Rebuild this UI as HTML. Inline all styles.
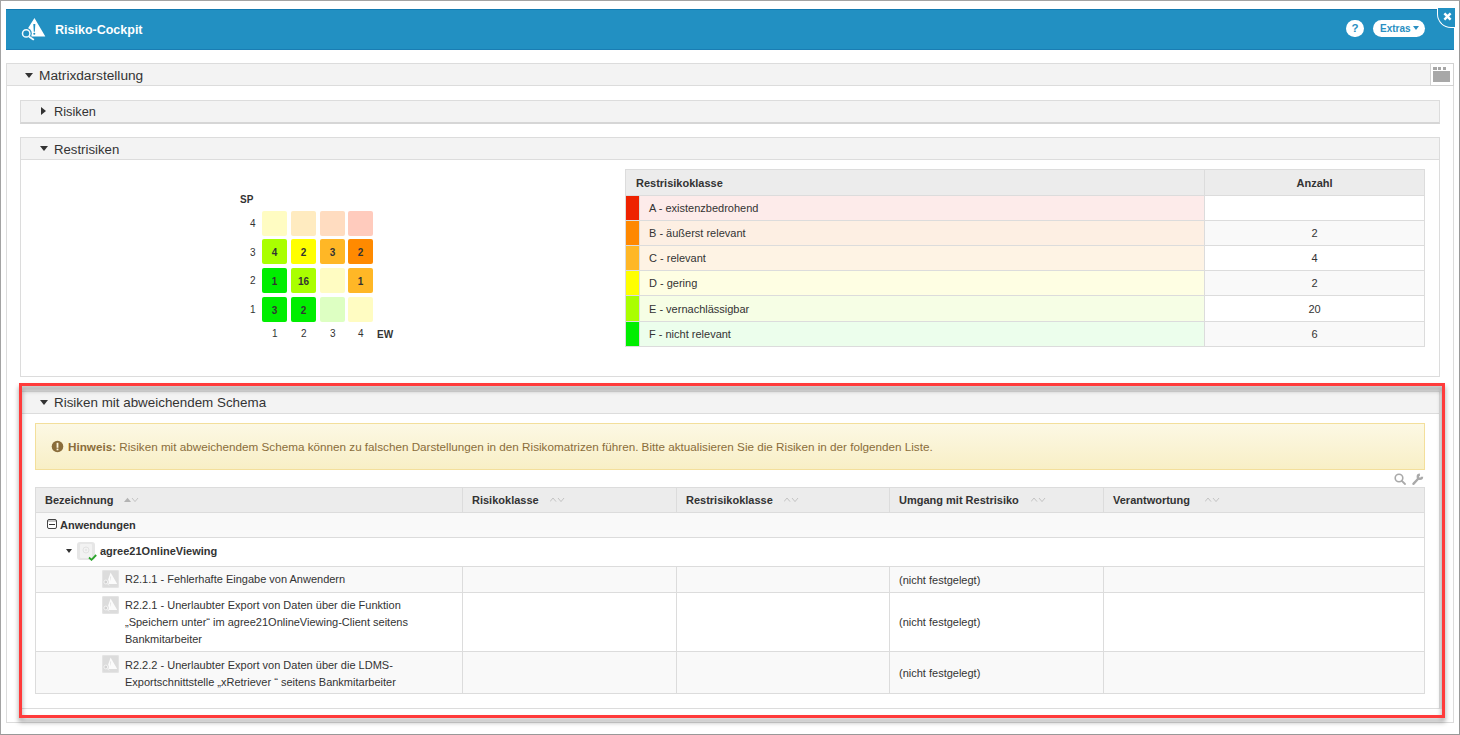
<!DOCTYPE html>
<html><head><meta charset="utf-8">
<style>
*{box-sizing:border-box;margin:0;padding:0}
html,body{width:1460px;height:735px;overflow:hidden;background:#fff}
body{font-family:"Liberation Sans",sans-serif;color:#333;position:relative}
.abs{position:absolute}
.outer{left:0;top:0;width:1460px;height:735px;border:1px solid #a3a3a3;border-right-color:#999;border-bottom-color:#999}
.hdr{left:6px;top:9px;width:1448px;height:41px;background:#2290c2;border-top:1px solid #137ab0;border-bottom:1px solid #1a7db3}
.title{left:55px;top:21px;font-size:12.5px;font-weight:bold;color:#fff;line-height:18px;white-space:nowrap}
.qbtn{left:1346px;top:20px;width:18px;height:17px;border-radius:9px;background:#fff;color:#2a8fc2;font-weight:bold;font-size:11.5px;line-height:16px;text-align:center}
.xbtn{left:1373px;top:20px;width:52px;height:17px;border-radius:9px;background:#fff;color:#2a8fc2;font-weight:bold;font-size:10px;line-height:17px;padding-left:7px;white-space:nowrap}
.close{left:1437px;top:8px;width:18px;height:20px;background:#2290c2;border-bottom-left-radius:14px;border-left:1px solid #fff;border-bottom:1px solid #fff}
.panel{border:1px solid #dcdcdc;background:#fff}
.ph{background:#f3f3f3;border-bottom:1px solid #dcdcdc}
.ptxt{font-size:13.2px;line-height:16px;color:#333;white-space:nowrap}
.caretd{width:0;height:0;border-left:4.5px solid transparent;border-right:4.5px solid transparent;border-top:5px solid #333}
.caretr{width:0;height:0;border-top:4px solid transparent;border-bottom:4px solid transparent;border-left:5px solid #333}
.cell{width:25px;height:25px;border-radius:2px;font-size:10px;font-weight:bold;text-align:center;line-height:27px;color:#333}
.lbl{font-size:10px;color:#333;line-height:12px}
table{border-collapse:collapse}
.leg{left:625px;top:169px;width:800px;font-size:11px}
.leg td,.leg th{border:1px solid #dcdcdc;height:25px;padding:0}
.leg th{background:#ececec;font-weight:bold;height:26px}
.grid{left:35px;top:487px;width:1390px;font-size:11px}
.grid td,.grid th{border:1px solid #dcdcdc;padding:0 9px;vertical-align:middle}
.grid th{background:#ececec;text-align:left;height:25px;white-space:nowrap}
.rc{padding:0 !important;position:relative;vertical-align:top !important}
.ri{position:absolute;left:66px;top:3px;width:17px;height:18px;border-radius:2px;background:#dcdcdc;box-shadow:inset 0 0 0 1px #e4e4e4}
.ri svg{position:absolute;left:0;top:0}
.rt{padding-left:89px;line-height:17px;white-space:nowrap;padding-top:3px}
.sort{display:inline-block;vertical-align:middle;margin-left:11px;width:15px;height:6px;position:relative;top:-5px}
</style></head><body>
<div class="abs outer"></div>

<!-- header -->
<div class="abs hdr"></div>
<svg class="abs" style="left:20px;top:16px" width="28" height="27" viewBox="0 0 28 27">
  <path d="M14.3 2.2 Q14.4 1.9 14.6 2.2 L25.2 20.2 Q25.3 20.6 24.9 20.6 L11.5 20.6 L10 18 L8 12.3 Z" fill="#fff"/>
  <path d="M13.3 8 L15.3 8 L14.8 15.8 L13.8 15.8 Z" fill="#2290c2"/>
  <circle cx="14.3" cy="17.7" r="1.05" fill="#2290c2"/>
  <circle cx="6.2" cy="17.4" r="5.6" fill="#2290c2"/>
  <circle cx="6.2" cy="17.4" r="3.7" fill="none" stroke="#f4fafd" stroke-width="1.5"/>
  <line x1="9.6" y1="20.9" x2="13.3" y2="23.4" stroke="#f4fafd" stroke-width="1.8" stroke-linecap="round"/>
</svg>
<div class="abs title">Risiko-Cockpit</div>
<div class="abs qbtn">?</div>
<div class="abs xbtn">Extras<span style="display:inline-block;width:0;height:0;border-left:3px solid transparent;border-right:3px solid transparent;border-top:4px solid #2a8fc2;margin-left:2px;position:relative;top:-2px"></span></div>
<div class="abs close"></div>
<svg class="abs" style="left:1443px;top:12px" width="9" height="9" viewBox="0 0 9 9"><path d="M2.2 2.2 L6.8 6.8 M6.8 2.2 L2.2 6.8" stroke="#fff" stroke-width="2.4" stroke-linecap="square"/></svg>

<!-- Matrixdarstellung panel -->
<div class="abs panel" style="left:6px;top:63px;width:1448px;height:660px"></div>
<div class="abs ph" style="left:7px;top:64px;width:1446px;height:22px"></div>
<div class="abs caretd" style="left:25px;top:73px"></div>
<div class="abs ptxt" style="left:39px;top:68px;font-size:13.7px">Matrixdarstellung</div>
<div class="abs" style="left:1430px;top:63px;width:24px;height:23px;background:#fff;border:1px solid #d2d2d2"></div>
<div class="abs" style="left:1433px;top:67px;width:3.5px;height:2.8px;background:#a6a6a6"></div>
<div class="abs" style="left:1438px;top:67px;width:3px;height:2.8px;background:#a6a6a6"></div>
<div class="abs" style="left:1442.7px;top:67px;width:3.2px;height:2.8px;background:#a6a6a6"></div>
<div class="abs" style="left:1433px;top:71px;width:17px;height:11px;background:#a8a8a8"></div>

<!-- Risiken panel -->
<div class="abs panel" style="left:20px;top:100px;width:1420px;height:24px;background:#f3f3f3;border-bottom:2px solid #d6d6d6"></div>
<div class="abs caretr" style="left:41px;top:107px"></div>
<div class="abs ptxt" style="left:54px;top:104px;font-size:12.8px">Risiken</div>

<!-- Restrisiken panel -->
<div class="abs panel" style="left:20px;top:137px;width:1420px;height:240px"></div>
<div class="abs ph" style="left:21px;top:138px;width:1418px;height:22px"></div>
<div class="abs caretd" style="left:40px;top:146px"></div>
<div class="abs ptxt" style="left:54px;top:142px">Restrisiken</div>

<!-- matrix -->
<div class="abs lbl" style="left:240px;top:194px;font-weight:bold">SP</div>
<div class="abs lbl" style="left:250px;top:218px">4</div>
<div class="abs lbl" style="left:250px;top:247px">3</div>
<div class="abs lbl" style="left:250px;top:275px">2</div>
<div class="abs lbl" style="left:250px;top:304px">1</div>
<div class="abs lbl" style="left:272px;top:328px">1</div>
<div class="abs lbl" style="left:301px;top:328px">2</div>
<div class="abs lbl" style="left:330px;top:328px">3</div>
<div class="abs lbl" style="left:358px;top:328px">4</div>
<div class="abs lbl" style="left:377px;top:329px;font-weight:bold">EW</div>

<div class="abs cell" style="left:262px;top:211px;background:#fffcc2"></div>
<div class="abs cell" style="left:291px;top:211px;background:#ffebc0"></div>
<div class="abs cell" style="left:320px;top:211px;background:#ffdcc0"></div>
<div class="abs cell" style="left:348px;top:211px;background:#ffcbbd"></div>

<div class="abs cell" style="left:262px;top:239px;background:#aaff00">4</div>
<div class="abs cell" style="left:291px;top:239px;background:#ffff00">2</div>
<div class="abs cell" style="left:320px;top:239px;background:#ffb726">3</div>
<div class="abs cell" style="left:348px;top:239px;background:#ff8a00">2</div>

<div class="abs cell" style="left:262px;top:268px;background:#00ee00">1</div>
<div class="abs cell" style="left:291px;top:268px;background:#aaff00">16</div>
<div class="abs cell" style="left:320px;top:268px;background:#fffcc2"></div>
<div class="abs cell" style="left:348px;top:268px;background:#ffb726">1</div>

<div class="abs cell" style="left:262px;top:297px;background:#00ee00">3</div>
<div class="abs cell" style="left:291px;top:297px;background:#00ee00">2</div>
<div class="abs cell" style="left:320px;top:297px;background:#ddffc2"></div>
<div class="abs cell" style="left:348px;top:297px;background:#fffcc2"></div>

<!-- legend table -->
<table class="abs leg">
<tr><th colspan="2" style="text-align:left;padding-left:10px;width:580px">Restrisikoklasse</th><th style="text-align:center">Anzahl</th></tr>
<tr style="background:#fdebea"><td style="width:14px;background:#ee2200"></td><td style="padding-left:9px">A - existenzbedrohend</td><td style="background:#fff;text-align:center;width:220px"></td></tr>
<tr style="background:#fdefe3"><td style="background:#ff8800"></td><td style="padding-left:9px">B - äußerst relevant</td><td style="background:#f9f9f9;text-align:center">2</td></tr>
<tr style="background:#fef3e4"><td style="background:#ffb726"></td><td style="padding-left:9px">C - relevant</td><td style="background:#fff;text-align:center">4</td></tr>
<tr style="background:#fefee3"><td style="background:#ffff00"></td><td style="padding-left:9px">D - gering</td><td style="background:#f9f9f9;text-align:center">2</td></tr>
<tr style="background:#f6fee5"><td style="background:#aaff00;height:26px"></td><td style="padding-left:9px">E - vernachlässigbar</td><td style="background:#fff;text-align:center">20</td></tr>
<tr style="background:#ecfeec"><td style="background:#00ee00"></td><td style="padding-left:9px">F - nicht relevant</td><td style="background:#f9f9f9;text-align:center">6</td></tr>
</table>

<!-- Risiken mit abweichendem Schema panel -->
<div class="abs" style="left:22px;top:386px;width:1420px;height:5px;background:#ececec"></div><div class="abs" style="left:1439px;top:386px;width:3px;height:323px;background:#ebebeb"></div>
<div class="abs panel" style="left:20px;top:391px;width:1420px;height:318px;border-top-color:#dcdcdc"></div>
<div class="abs ph" style="left:21px;top:392px;width:1418px;height:22px"></div>
<div class="abs caretd" style="left:40px;top:400px"></div>
<div class="abs ptxt" style="left:54px;top:395px;font-size:13.4px">Risiken mit abweichendem Schema</div>

<div class="abs" style="left:35px;top:423px;width:1390px;height:47px;border:1px solid #f3df9b;background:linear-gradient(#fcf8e4,#f8efc6)"></div>
<svg class="abs" style="left:51px;top:440px" width="13" height="13" viewBox="0 0 13 13"><circle cx="6.5" cy="6.5" r="5.8" fill="#8a6d3b"/><rect x="5.6" y="2.8" width="1.8" height="5" fill="#fcf5dc"/><rect x="5.6" y="8.6" width="1.8" height="1.7" fill="#fcf5dc"/></svg>
<div class="abs" style="left:68px;top:439px;font-size:11.7px;line-height:15px;color:#8a6d3b;white-space:nowrap"><b>Hinweis:</b> Risiken mit abweichendem Schema können zu falschen Darstellungen in den Risikomatrizen führen. Bitte aktualisieren Sie die Risiken in der folgenden Liste.</div>

<svg class="abs" style="left:1392px;top:471px" width="34" height="16" viewBox="0 0 34 16">
 <circle cx="7" cy="7" r="3.8" fill="none" stroke="#a9a9a9" stroke-width="1.6"/>
 <line x1="9.8" y1="9.8" x2="13" y2="13" stroke="#a9a9a9" stroke-width="1.8" stroke-linecap="round"/>
 <path d="M21.4 12.9 L26.6 7.3" stroke="#a9a9a9" stroke-width="2.3" stroke-linecap="round"/>
 <path d="M27.9 3.7 A2.1 2.1 0 1 0 30.0 5.8" fill="none" stroke="#a9a9a9" stroke-width="2.4"/>
</svg>

<table class="abs grid">
<tr>
<th style="width:427px">Bezeichnung<span class="sort"><svg width="15" height="6" viewBox="0 0 15 6"><path d="M0 5 L3.5 0.8 L7 5 Z" fill="#b3b3b3"/><path d="M8 1 L11 4.6 L14 1" fill="none" stroke="#c3c3c3" stroke-width="1"/></svg></span></th>
<th style="width:214px">Risikoklasse<span class="sort"><svg width="15" height="6" viewBox="0 0 15 6"><path d="M0 4.6 L3 1 L6 4.6" fill="none" stroke="#c3c3c3" stroke-width="1"/><path d="M8 1 L11 4.6 L14 1" fill="none" stroke="#c3c3c3" stroke-width="1"/></svg></span></th>
<th style="width:213px">Restrisikoklasse<span class="sort"><svg width="15" height="6" viewBox="0 0 15 6"><path d="M0 4.6 L3 1 L6 4.6" fill="none" stroke="#c3c3c3" stroke-width="1"/><path d="M8 1 L11 4.6 L14 1" fill="none" stroke="#c3c3c3" stroke-width="1"/></svg></span></th>
<th style="width:214px">Umgang mit Restrisiko<span class="sort" style="margin-left:12px"><svg width="15" height="6" viewBox="0 0 15 6"><path d="M0 4.6 L3 1 L6 4.6" fill="none" stroke="#c3c3c3" stroke-width="1"/><path d="M8 1 L11 4.6 L14 1" fill="none" stroke="#c3c3c3" stroke-width="1"/></svg></span></th>
<th>Verantwortung<span class="sort" style="margin-left:15px"><svg width="15" height="6" viewBox="0 0 15 6"><path d="M0 4.6 L3 1 L6 4.6" fill="none" stroke="#c3c3c3" stroke-width="1"/><path d="M8 1 L11 4.6 L14 1" fill="none" stroke="#c3c3c3" stroke-width="1"/></svg></span></th>
</tr>
<tr style="background:#f9f9f9"><td colspan="5" style="height:25px;font-weight:bold;padding-left:11px"><span style="display:inline-block;width:10px;height:10px;border:1px solid #444;border-radius:2px;vertical-align:0px;margin-right:3px;position:relative;background:linear-gradient(#c8c8c8 0,#c8c8c8 2px,#fff 2px)"><span style="position:absolute;left:1px;top:3.5px;width:6px;height:1.2px;background:#333"></span></span>Anwendungen</td></tr>
<tr style="background:#fff"><td colspan="5" style="height:29px;font-weight:bold;padding:0;position:relative">
<span style="position:absolute;left:30px;top:11px;width:0;height:0;border-left:3.6px solid transparent;border-right:3.6px solid transparent;border-top:4.2px solid #333"></span>
<span style="position:absolute;left:41px;top:4px;width:18px;height:18px;border-radius:3px;background:#e6e6e6"><span style="position:absolute;left:3px;top:2px;width:12px;height:14px;background:#f2f2f2;border-radius:1px"></span><svg style="position:absolute;left:0;top:0" width="18" height="18" viewBox="0 0 18 18"><circle cx="9" cy="8" r="3" fill="none" stroke="#e2e2e2" stroke-width="1"/><circle cx="9" cy="8" r="0.9" fill="#e2e2e2"/></svg><svg style="position:absolute;left:11px;top:12px" width="9" height="7" viewBox="0 0 9 7"><path d="M1 3.5 L3.5 5.8 L8.2 1" fill="none" stroke="#2aa52a" stroke-width="1.8"/></svg></span>
<span style="position:absolute;left:64px;top:6px;line-height:15px">agree21OnlineViewing</span></td></tr>
<tr style="background:#f9f9f9"><td class="rc" style="height:26px"><span class="ri"><svg width="17" height="18" viewBox="0 0 17 18"><path d="M8.6 2.6 L15.2 14 L4.6 14 Z" fill="#fbfbfb"/><path d="M8.1 6.5 L9.1 6.5 L8.8 10.5 L8.4 10.5 Z" fill="#e2e2e2"/><circle cx="3.8" cy="12" r="3" fill="#dcdcdc"/><circle cx="3.8" cy="12" r="1.9" fill="#d2d2d2" stroke="#f6f6f6" stroke-width="0.9"/><line x1="5.3" y1="13.6" x2="7" y2="15.4" stroke="#f6f6f6" stroke-width="1"/></svg></span><div class="rt" style="padding-top:4px">R2.1.1 - Fehlerhafte Eingabe von Anwendern</div></td><td></td><td></td><td>(nicht festgelegt)</td><td></td></tr>
<tr style="background:#fff"><td class="rc" style="height:59px;"><span class="ri"><svg width="17" height="18" viewBox="0 0 17 18"><path d="M8.6 2.6 L15.2 14 L4.6 14 Z" fill="#fbfbfb"/><path d="M8.1 6.5 L9.1 6.5 L8.8 10.5 L8.4 10.5 Z" fill="#e2e2e2"/><circle cx="3.8" cy="12" r="3" fill="#dcdcdc"/><circle cx="3.8" cy="12" r="1.9" fill="#d2d2d2" stroke="#f6f6f6" stroke-width="0.9"/><line x1="5.3" y1="13.6" x2="7" y2="15.4" stroke="#f6f6f6" stroke-width="1"/></svg></span><div class="rt" style="padding-top:4px">R2.2.1 - Unerlaubter Export von Daten über die Funktion<br>„Speichern unter“ im agree21OnlineViewing-Client seitens<br>Bankmitarbeiter</div></td><td></td><td></td><td>(nicht festgelegt)</td><td></td></tr>
<tr style="background:#f9f9f9"><td class="rc" style="height:42px"><span class="ri"><svg width="17" height="18" viewBox="0 0 17 18"><path d="M8.6 2.6 L15.2 14 L4.6 14 Z" fill="#fbfbfb"/><path d="M8.1 6.5 L9.1 6.5 L8.8 10.5 L8.4 10.5 Z" fill="#e2e2e2"/><circle cx="3.8" cy="12" r="3" fill="#dcdcdc"/><circle cx="3.8" cy="12" r="1.9" fill="#d2d2d2" stroke="#f6f6f6" stroke-width="0.9"/><line x1="5.3" y1="13.6" x2="7" y2="15.4" stroke="#f6f6f6" stroke-width="1"/></svg></span><div class="rt" style="padding-top:5px">R2.2.2 - Unerlaubter Export von Daten über die LDMS-<br>Exportschnittstelle „xRetriever “ seitens Bankmitarbeiter</div></td><td></td><td></td><td>(nicht festgelegt)</td><td></td></tr>
</table>

<!-- red annotation -->
<div class="abs" style="left:19px;top:383px;width:1426px;height:335px;border:3px solid #ff3b3b;filter:drop-shadow(0px 4px 2.5px rgba(0,0,0,0.42))"></div>
</body></html>
